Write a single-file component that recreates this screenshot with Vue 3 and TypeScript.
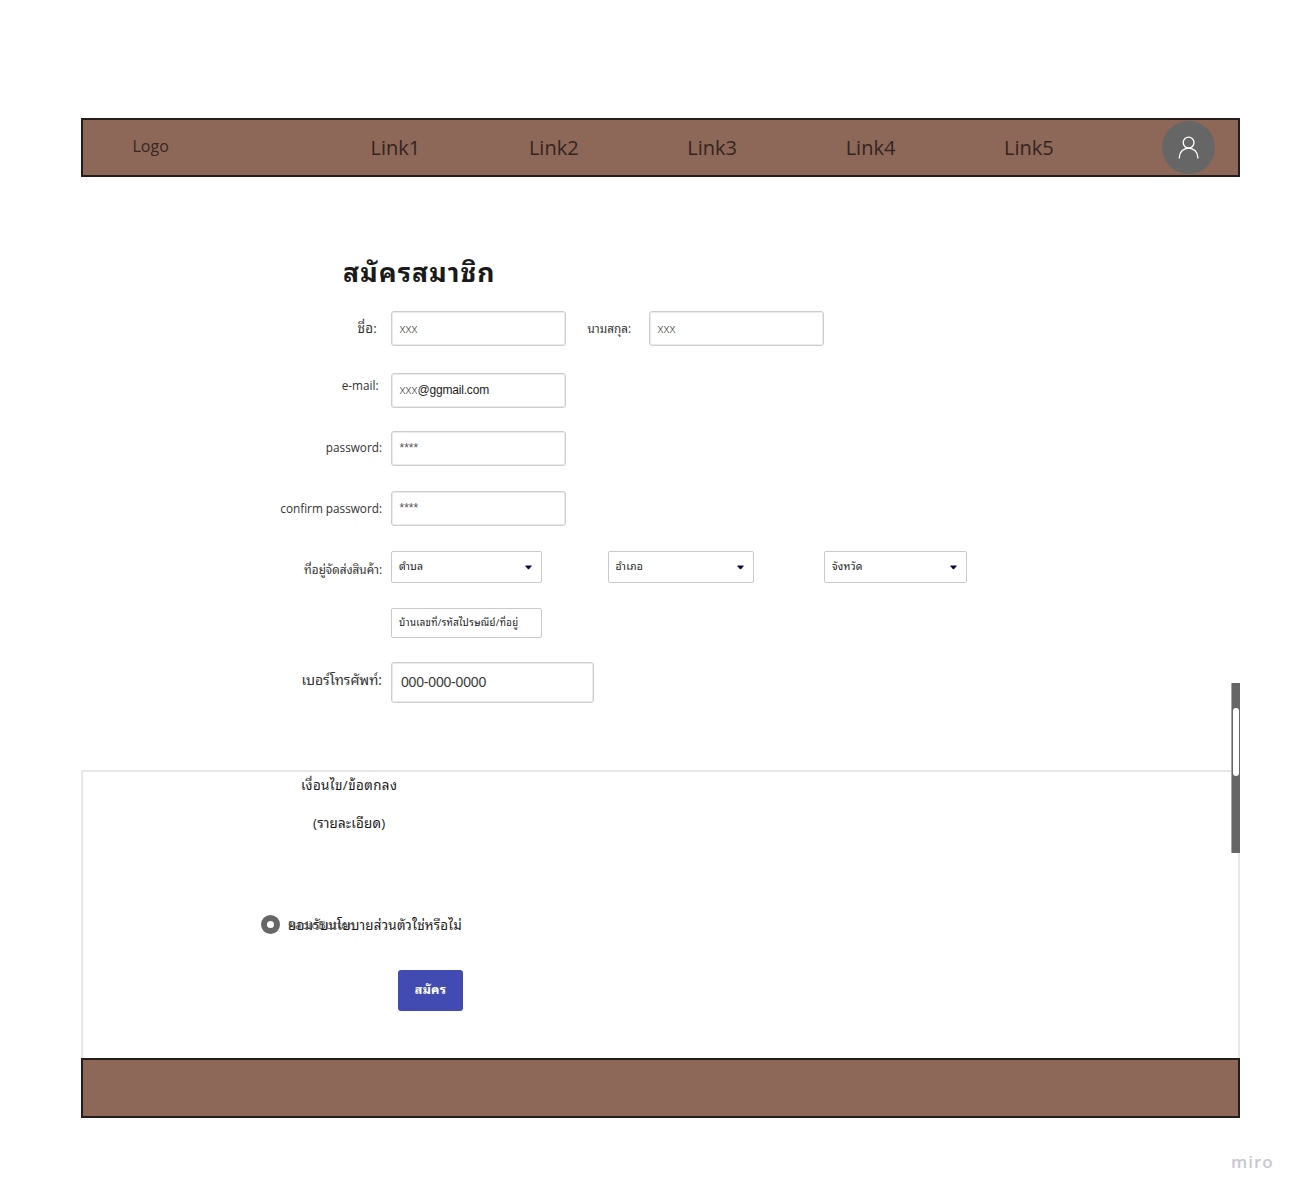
<script setup lang="ts">
interface Field {
  id: string
  label: string
  value: string
}

const links: string[] = ['Link1', 'Link2', 'Link3', 'Link4', 'Link5']

const passwords: Field[] = [
  { id: 'password', label: 'password:', value: '****' },
  { id: 'confirm', label: 'confirm password:', value: '****' },
]

const areas: Field[] = [
  { id: 'tambon', label: '', value: 'ตำบล' },
  { id: 'amphoe', label: '', value: 'อำเภอ' },
  { id: 'province', label: '', value: 'จังหวัด' },
]
</script>

<template>
  <div class="page">
    <header class="bar header">
      <span class="logo">Logo</span>
      <nav class="nav">
        <a v-for="link in links" :key="link" class="link">{{ link }}</a>
      </nav>
      <span class="avatar">
        <svg width="52" height="52" viewBox="0 0 52 52" fill="none" stroke="#fff" stroke-width="1.3">
          <circle cx="26.6" cy="21.6" r="5.4" />
          <path d="M17.3 37.4v-1a9.3 9.3 0 0 1 18.6 0v1" />
        </svg>
      </span>
    </header>

    <main class="form">
      <h1 class="title"><span>สมัครสมาชิก</span></h1>

      <div class="row name">
        <label class="label"><span class="t-name">ชื่อ:</span></label>
        <div class="box"><span class="light">xxx</span></div>
        <label class="label surname"><span>นามสกุล:</span></label>
        <div class="box"><span class="light">xxx</span></div>
      </div>

      <div class="row email">
        <label class="label">e-mail:</label>
        <div class="box"><span class="light">xxx</span><span class="mail">@ggmail.com</span></div>
      </div>

      <div v-for="f in passwords" :key="f.id" class="row" :class="f.id">
        <label class="label">{{ f.label }}</label>
        <div class="box"><span class="stars">{{ f.value }}</span></div>
      </div>

      <div class="row address">
        <label class="label"><span>ที่อยู่จัดส่งสินค้า:</span></label>
        <div v-for="a in areas" :key="a.id" class="select" :class="a.id">
          <span>{{ a.value }}</span>
          <svg width="7" height="5" viewBox="0 0 8 5"><path d="M.8.3h6.4q.6.3.2.9L4.8 4.2q-.8.7-1.6 0L.6 1.2Q.2.6.8.3z" fill="#0a0a3c" /></svg>
        </div>
      </div>

      <div class="row house">
        <div class="select small"><span>บ้านเลขที่/รหัสไปรษณีย์/ที่อยู่</span></div>
      </div>

      <div class="row phone">
        <label class="label"><span>เบอร์โทรศัพท์:</span></label>
        <div class="box large"><span>000-000-0000</span></div>
      </div>
    </main>

    <section class="terms">
      <p class="terms-title"><span>เงื่อนไข/ข้อตกลง</span></p>
      <p class="terms-detail"><span>(รายละเอียด)</span></p>
      <div class="consent">
        <span class="radio"></span>
        <span class="consent-text">
          <span class="under">RadioButton</span>
          <span class="over">ยอมรับนโยบายส่วนตัวใช่หรือไม่</span>
        </span>
      </div>
      <button class="submit" type="button"><span>สมัคร</span></button>
      <div class="scrollbar"><div class="thumb"></div></div>
    </section>

    <footer class="bar footer"></footer>
    <div class="brand">miro</div>
  </div>
</template>

<style>
body {
  background: #fff;
}
</style>

<style scoped>
.page {
  --sans: 'Open Sans', Tahoma, 'Noto Sans Thai Looped', Loma, Waree, Garuda, 'Noto Sans Thai', sans-serif;
  box-sizing: border-box;
  width: 1303px;
  height: 1198px;
  padding: 118px 63px 0 81px;
  overflow: hidden;
  font-family: var(--sans);
  color: #1a1a1a;
  white-space: nowrap;
}
.page * {
  box-sizing: border-box;
}
.page span {
  display: inline-block;
}
.bar {
  height: 60px;
  border: 2px solid #231d1c;
  background: #8d6859;
}
.header {
  display: flex;
  align-items: center;
  height: 59px;
  margin-bottom: 1px;
}
.logo {
  width: 287.5px;
  padding: 0 0 4px 49.5px;
  font-size: 16px;
  color: #35261f;
}
.nav {
  display: flex;
  padding-bottom: 1px;
}
.link {
  width: 158.4px;
  font-size: 20px;
  color: #33241e;
}
.page .avatar {
  display: block;
  width: 53px;
  height: 53px;
  border-radius: 50%;
  background: #666;
}
.form {
  height: 592px;
}
.title {
  height: 133px;
  margin: 0;
  padding: 74px 0 0 262px;
  font-size: 26.5px;
  line-height: 40px;
  letter-spacing: 1.1px;
}
.row {
  display: flex;
  height: 36px;
}
.label {
  width: 310px;
  padding-right: 9px;
  text-align: right;
  font-size: 11.75px;
  font-weight: 400;
  line-height: 33px;
  color: #333;
}
.box {
  display: flex;
  width: 175px;
  height: 35px;
  padding-left: 7.5px;
  border: 1px solid #cdcdcd;
  border-radius: 3px;
  box-shadow: inset 0 0 0 1px #ebebeb;
  font-size: 12px;
  line-height: 34px;
}
.light {
  font-weight: 300;
}
.mail {
  font-family: 'Liberation Sans', sans-serif;
  letter-spacing: -0.18px;
}
.stars {
  font-family: 'Liberation Sans', sans-serif;
  line-height: 33px;
  color: #555;
}
.name {
  margin-bottom: 26px;
}
.name .label {
  padding-right: 14px;
  line-height: 35px;
}
.name .t-name {
  font-size: 13.5px;
  letter-spacing: 0.2px;
}
.name .surname {
  width: 83px;
  padding-right: 18px;
}
.email {
  margin-bottom: 22px;
}
.email .label {
  padding-right: 12.5px;
  line-height: 25px;
}
.email .box {
  line-height: 32px;
}
.password {
  margin-bottom: 24px;
}
.confirm {
  margin-bottom: 24px;
}
.confirm .label {
  line-height: 35px;
}
.address {
  height: 32px;
  margin-bottom: 25px;
}
.address .label {
  line-height: 37px;
}
.select {
  display: flex;
  justify-content: space-between;
  width: 151px;
  height: 32px;
  padding: 0 9px 0 7px;
  border: 1px solid #cacaca;
  border-radius: 2px;
  font-size: 10.5px;
  letter-spacing: 0.2px;
  line-height: 29px;
}
.select svg {
  margin-top: 13px;
}
.amphoe {
  width: 146px;
  margin-left: 65.6px;
}
.province {
  width: 143px;
  margin-left: 70.4px;
}
.house {
  height: 30px;
  margin-bottom: 24px;
  padding-left: 310px;
}
.small {
  height: 30px;
  font-size: 9.6px;
  letter-spacing: 0.33px;
  line-height: 28px;
}
.phone .label {
  font-size: 14px;
  line-height: 35px;
}
.large {
  width: 203px;
  height: 41px;
  padding-left: 9px;
  font-family: 'Liberation Sans', sans-serif;
  font-size: 14px;
  letter-spacing: -0.18px;
  line-height: 39px;
  color: #3a3a3a;
}
.terms {
  position: relative;
  height: 288px;
  border: 2px solid #e7e7e7;
  border-bottom: 0;
}
.terms p {
  margin: 0;
  font-size: 13.4px;
  line-height: 26px;
}
.terms-title {
  padding-left: 218px;
  letter-spacing: 0.4px;
}
.terms .terms-detail {
  margin-top: 12px;
  padding-left: 230px;
  letter-spacing: 0.2px;
}
.consent {
  display: flex;
  height: 20px;
  margin: 79px 0 0 178px;
}
.page .radio {
  width: 19px;
  height: 19px;
  border: 6px solid #666;
  border-radius: 50%;
}
.consent-text {
  position: relative;
  margin-left: 8px;
  font-size: 13.4px;
  letter-spacing: 0.2px;
  line-height: 20px;
}
.page .under {
  position: absolute;
  left: 0;
  top: 0;
  font-size: 11.5px;
  letter-spacing: 0;
  color: #555;
}
.submit {
  display: block;
  width: 65px;
  height: 41px;
  margin: 35px 0 0 315px;
  padding: 0;
  border: 0;
  border-radius: 3px;
  background: #424bb1;
  color: #fff;
  font: 700 12.5px/38px var(--sans);
  letter-spacing: 0.2px;
}
.submit span {
  margin-bottom: 2px;
}
.scrollbar {
  position: absolute;
  right: -2px;
  top: -89px;
  width: 9px;
  height: 170px;
  padding: 25px 1px 0 1px;
  border-left: 1px solid #a5a5a5;
  background: #666;
}
.thumb {
  width: 6px;
  height: 68px;
  border-radius: 3px;
  background: #fff;
}
.brand {
  margin: 31.5px 0 0 1150px;
  font-size: 17px;
  font-weight: 600;
  line-height: 24px;
  letter-spacing: 1px;
  color: #c9c7d3;
}
</style>
